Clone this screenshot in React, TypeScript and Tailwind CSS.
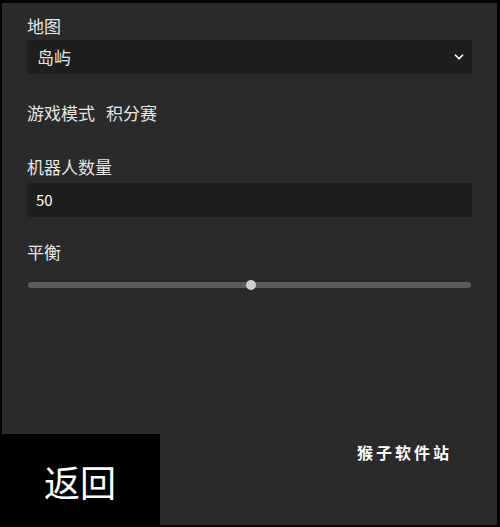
import { ChevronDown } from 'lucide-react';

const font = { fontFamily: '"Noto Sans CJK SC", "Noto Sans", sans-serif' };

export default function App() {
    return (
        <div className="relative h-[527px] w-[500px] overflow-hidden bg-black" style={font}>
            <div className="ml-[2px] mt-[3px] h-[522px] w-[495px] bg-[#2a2a2a] px-[25px] pt-[11px] text-[#e6e6e6]">
                <p className="text-[17px] leading-[23px]">地图</p>
                <div className="mt-[3px] flex h-[34px] items-center justify-between rounded-[3px] bg-[#1e1e1e] pl-[10px] pr-[6px] text-[17px]">
                    <span>岛屿</span>
                    <ChevronDown className="h-[14px] w-[14px] text-white" strokeWidth={3} />
                </div>

                <p className="mt-[27px] flex gap-[11px] text-[17px] leading-[23px]">
                    <span>游戏模式</span>
                    <span>积分赛</span>
                </p>

                <p className="mt-[31px] text-[17px] leading-[23px]">机器人数量</p>
                <div className="mt-[5px] flex h-[34px] items-center rounded-[3px] bg-[#1e1e1e] px-[9px] text-[15px] text-white">
                    50
                </div>

                <p className="mt-[23px] text-[17px] leading-[23px]">平衡</p>
                <div className="relative mx-[1px] mt-[19px] h-[6px] rounded-full bg-[#5c5c5c]">
                    <div className="absolute left-[218px] top-1/2 h-[10px] w-[10px] -translate-y-1/2 rounded-full bg-[#cfcfcf]" />
                </div>

                <p className="absolute left-[357px] top-[440px] text-[16px] font-bold tracking-[3px] text-white">
                    猴子软件站
                </p>
            </div>

            <div className="absolute bottom-0 left-0 flex h-[93px] w-[160px] items-center justify-center bg-black">
                <span className="mt-[1px] text-[36px] leading-none text-white">返回</span>
            </div>
        </div>
    );
}
